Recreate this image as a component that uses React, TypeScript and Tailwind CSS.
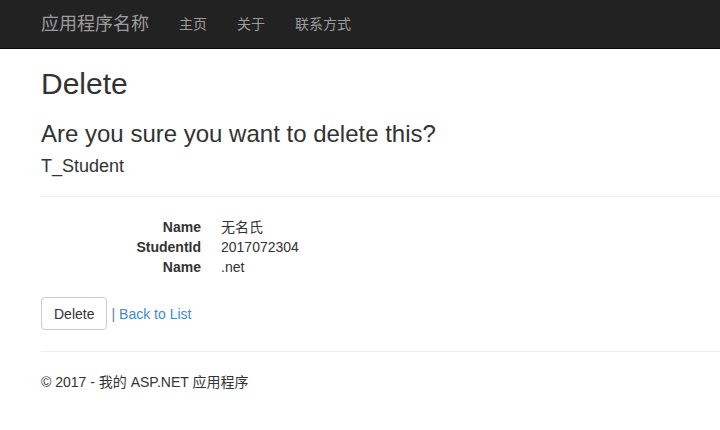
const sans = "font-['Helvetica_Neue','Liberation_Sans',Arial,'Noto_Sans_CJK_SC',sans-serif]";

export default function App() {
  return (
    <div className={`min-h-[430px] bg-white text-[14px] leading-[20px] text-[#333] ${sans}`}>
      {/* Navbar */}
      <div className="box-border flex h-[49px] items-center border-b border-[#080808] bg-[#222] pl-[41px]">
        <span className="text-[18px] text-[#9d9d9d]">应用程序名称</span>
        <nav className="ml-[30px] flex gap-[30px] text-[14px] text-[#9d9d9d]">
          <a>主页</a>
          <a>关于</a>
          <a>联系方式</a>
        </nav>
      </div>

      <div className="pl-[41px]">
        <h2 className="mt-[18px] text-[30px] leading-[33px] font-normal">Delete</h2>
        <h3 className="mt-[21px] text-[24px] leading-[26px] font-normal">
          Are you sure you want to delete this?
        </h3>
        <div>
          <h4 className="mt-[9px] text-[18px] leading-[20px] font-normal">T_Student</h4>
          <hr className="mt-[20px] mb-[20px] border-t border-[#eee]" />
          <dl className="grid grid-cols-[160px_1fr] gap-x-[20px]">
            <dt className="text-right font-bold">Name</dt>
            <dd>无名氏</dd>
            <dt className="text-right font-bold">StudentId</dt>
            <dd>2017072304</dd>
            <dt className="text-right font-bold">Name</dt>
            <dd>.net</dd>
          </dl>

          <div className="mt-[20px] flex items-center">
            <button className="h-[33px] rounded-[4px] border border-[#ccc] bg-white px-[12px] text-[14px] text-[#333]">
              Delete
            </button>
            <span className="ml-[4px] text-[#5a7ea8]">|</span>
            <a className="ml-[4px] text-[#428bca]">Back to List</a>
          </div>
        </div>

        <hr className="mt-[21px] border-t border-[#eee]" />
        <footer className="pt-[20px]">
          <p>© 2017 - 我的 ASP.NET 应用程序</p>
        </footer>
      </div>
    </div>
  );
}
